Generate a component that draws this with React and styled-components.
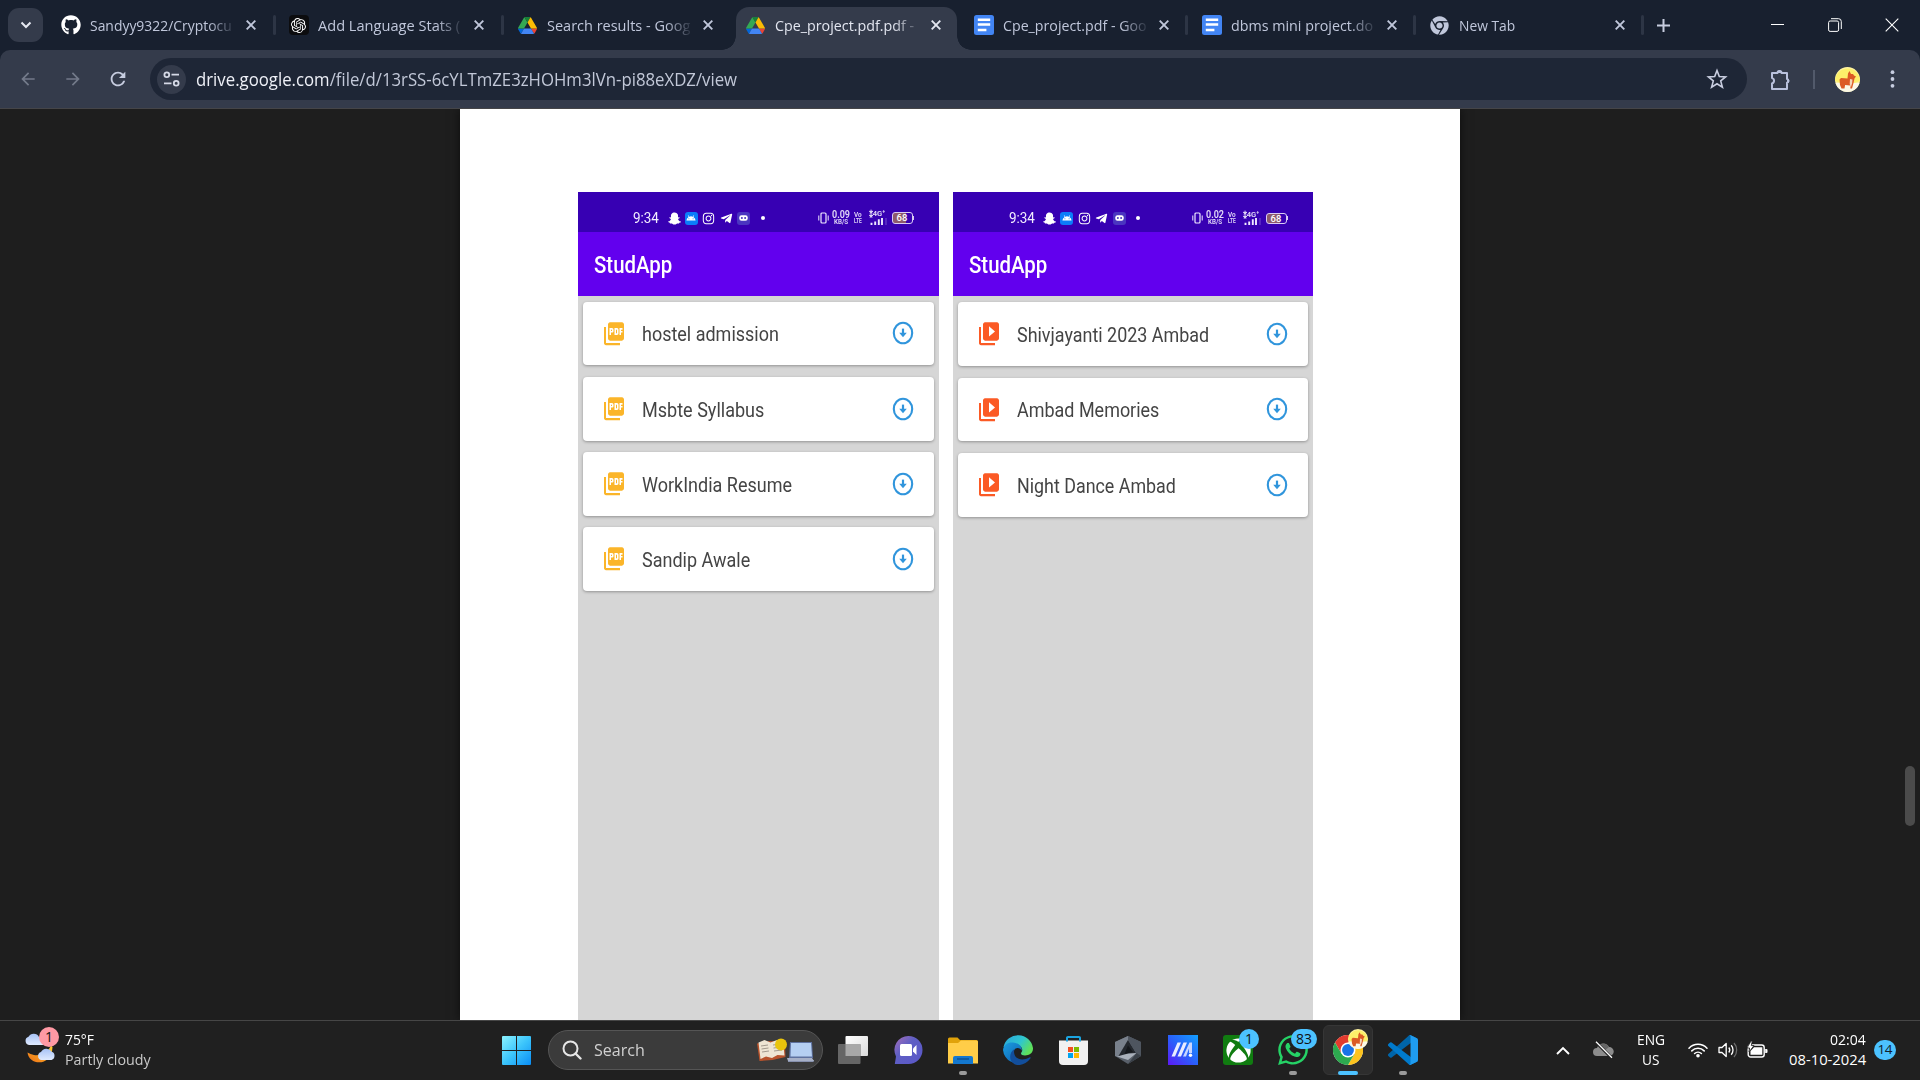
import React, { useLayoutEffect, useRef, useState } from "react";
import styled, { createGlobalStyle, css } from "styled-components";
import { FaGithub, FaXbox, FaWhatsapp, FaInstagram, FaSnapchatGhost, FaTelegramPlane, FaChrome } from "react-icons/fa";
import { SiOpenai } from "react-icons/si";
import { MdPictureAsPdf, MdVideoLibrary, MdArrowBack, MdArrowForward, MdRefresh, MdAndroid } from "react-icons/md";

const GlobalStyle = createGlobalStyle`
  * { box-sizing: border-box; }
  html, body { margin: 0; padding: 0; background: #1e1e1e; overflow: hidden; }
  svg { display: block; flex: none; }
`;

const UI = `"Open Sans", "Noto Sans", sans-serif`;
const PHONE = `Roboto, "Liberation Sans", sans-serif`;

/* ---------- text fitted to a column width ---------- */
const FitBox = styled.span`
  display: block;
  flex: none;
  width: ${(p) => p.$w}px;
  white-space: pre;
  overflow: visible;
`;
const FitInner = styled.span`
  display: inline-block;
  transform-origin: left center;
`;
function Fit({ w, children }) {
  const ref = useRef(null);
  const [scale, setScale] = useState(1);
  useLayoutEffect(() => {
    if (ref.current) setScale(w / ref.current.offsetWidth);
  }, [w, children]);
  return (
    <FitBox $w={w}>
      <FitInner ref={ref} style={{ transform: `scaleX(${scale})` }}>{children}</FitInner>
    </FitBox>
  );
}

/* ---------- shell ---------- */
const Screen = styled.div`
  width: 1920px;
  height: 1080px;
  display: flex;
  flex-direction: column;
  overflow: hidden;
  background: #1e1e1e;
  font-family: ${UI};
`;

/* ---------- tab strip ---------- */
const TabStrip = styled.header`
  height: 50px;
  flex: none;
  display: flex;
  align-items: center;
  background: #18202f;
  padding-left: 8px;
`;
const TabSearch = styled.button`
  width: 35px;
  height: 34px;
  margin-right: 5px;
  border: 0;
  padding: 0;
  border-radius: 11px;
  background: #343b4b;
  display: grid;
  place-items: center;
`;
const TabItem = styled.div`
  position: relative;
  width: 228px;
  height: 50px;
  flex: none;
  display: flex;
  align-items: center;
  padding-left: ${(p) => (p.$shift ? 13.5 : 12.5)}px;
  color: ${(p) => (p.$active ? "#e3e6f0" : "#c0c7db")};
  ${(p) =>
    p.$sep &&
    css`
      &::after {
        content: "";
        position: absolute;
        right: 0;
        top: 15px;
        width: 3px;
        height: 20px;
        border-radius: 2px;
        background: #2d3545;
      }
    `}
`;
const ActiveShape = styled.div`
  position: absolute;
  left: 4px;
  right: 3px;
  top: 7px;
  bottom: 0;
  background: #343b4b;
  border-radius: 13px 13px 0 0;
  &::before,
  &::after {
    content: "";
    position: absolute;
    bottom: 0;
    width: 14px;
    height: 14px;
  }
  &::before {
    left: -14px;
    background: radial-gradient(circle at 0 0, transparent 13.5px, #343b4b 14px);
  }
  &::after {
    right: -14px;
    background: radial-gradient(circle at 100% 0, transparent 13.5px, #343b4b 14px);
  }
`;
const TabIcon = styled.span`
  position: relative;
  width: 20px;
  height: 20px;
  display: grid;
  place-items: center;
`;
const TabTitle = styled.span`
  position: relative;
  width: 144px;
  height: 26px;
  line-height: 24px;
  margin-left: 9.5px;
  padding-top: 1px;
  font-size: 14.8px;
  ${(p) =>
    p.$fade &&
    css`
      mask-image: linear-gradient(90deg, #000 82%, transparent 102%);
    `}
`;
const TabClose = styled.span`
  position: relative;
  width: 20px;
  height: 20px;
  margin-left: 7px;
  display: grid;
  place-items: center;
`;
const NewTab = styled.span`
  width: 39px;
  display: grid;
  place-items: center;
`;
const WindowControls = styled.div`
  margin-left: auto;
  display: flex;
`;
const WindowButton = styled.span`
  width: 57px;
  height: 50px;
  display: grid;
  place-items: center;
`;

/* ---------- toolbar ---------- */
const ToolbarBack = styled.div`
  height: 59px;
  flex: none;
  background: #18202f;
`;
const Toolbar = styled.div`
  height: 59px;
  display: flex;
  align-items: center;
  background: #343b4b;
  border-radius: 10px 10px 0 0;
  border-bottom: 1px solid #454548;
  padding-left: 5px;
`;
const NavButton = styled.span`
  width: 45px;
  display: grid;
  place-items: center;
  color: ${(p) => (p.$dim ? "#737a8a" : "#c7cde0")};
`;
const Omnibox = styled.div`
  width: 1597px;
  height: 42px;
  margin-left: 10px;
  border-radius: 21px;
  background: #1e2636;
  display: flex;
  align-items: center;
  padding: 0 18px 0 7px;
`;
const SiteInfo = styled.span`
  width: 29px;
  height: 29px;
  border-radius: 50%;
  background: #343b4b;
  display: grid;
  place-items: center;
  margin-right: 10px;
`;
const Url = styled.div`
  display: flex;
  font-size: 17.4px;
  line-height: 24px;
  color: #c2c8d8;
  flex: 1;
`;
const Host = styled.span`
  color: #eef0f7;
`;
const ToolIcon = styled.span`
  width: ${(p) => p.$w}px;
  display: grid;
  place-items: center;
  flex: none;
`;
const Divider = styled.span`
  width: 2px;
  height: 19px;
  background: #525a6b;
`;

/* ---------- document ---------- */
const Viewport = styled.main`
  flex: 1;
  min-height: 0;
  display: flex;
  background: #1e1e1e;
  overflow: hidden;
`;
const Gutter = styled.div`
  width: 460px;
  flex: none;
  display: flex;
  justify-content: flex-end;
  align-items: flex-start;
`;
const ScrollThumb = styled.div`
  width: 10px;
  height: 60px;
  margin: 657px 5px 0 0;
  border-radius: 5px;
  background: #4b4b4b;
`;
const Sheet = styled.article`
  width: 1000px;
  flex: none;
  background: #fff;
  box-shadow: 0 0 10px rgba(0, 0, 0, 0.6);
  display: flex;
  align-items: stretch;
  padding: 82px 0 0 117.5px;
  gap: 14px;
`;
const Phone = styled.section`
  width: ${(p) => p.$w}px;
  margin-top: ${(p) => p.$top}px;
  background: #d6d6d6;
  display: flex;
  flex-direction: column;
  font-family: ${PHONE};
`;
const StatusBar = styled.div`
  height: 40.5px;
  flex: none;
  background: #3700b3;
  color: #fff;
  display: flex;
  align-items: center;
  padding: 12.5px 25px 0 55.5px;
`;
const Clock = styled.span`
  font-size: 15px;
  line-height: 16px;
  width: 34.5px;
  color: #f2edff;
`;
const StatusIcons = styled.span`
  display: flex;
  align-items: center;
  gap: 4.4px;
`;
const StatusTile = styled.span`
  width: 13px;
  height: 13px;
  display: grid;
  place-items: center;
  border-radius: 3px;
  background: ${(p) => p.$bg || "transparent"};
`;
const Dot = styled.span`
  width: 4px;
  height: 4px;
  border-radius: 50%;
  background: #fff;
  margin-left: 6.5px;
`;
const StatusRight = styled.span`
  margin-left: auto;
  display: flex;
  align-items: center;
  color: #e3daf8;
`;
const Stack = styled.span`
  display: flex;
  flex-direction: column;
  align-items: center;
  width: ${(p) => p.$w}px;
  margin-left: ${(p) => p.$ml}px;
  font-size: 8px;
  line-height: 6.5px;
  font-weight: 600;
`;
const Rate = styled.span`
  font-size: 11px;
  line-height: 8.5px;
`;
const Battery = styled.span`
  width: 21px;
  height: 11.5px;
  margin-left: 4.5px;
  border: 1px solid #d9cbf4;
  border-radius: 3px;
  background: linear-gradient(90deg, #8d5a6c 70%, #3700b3 70%);
  font-size: 9.5px;
  line-height: 10px;
  font-weight: 500;
  text-align: center;
  color: #fff;
`;
const BatteryTip = styled.span`
  width: 1.5px;
  height: 4px;
  background: #d9cbf4;
`;
const AppBar = styled.div`
  height: 64px;
  flex: none;
  background: #6200ee;
  color: #fff;
  display: flex;
  align-items: center;
  padding: 2px 0 0 16px;
  font-size: 23px;
  font-weight: 500;
`;
const List = styled.div`
  display: flex;
  flex-direction: column;
  padding: 5.6px 5px;
  gap: ${(p) => p.$gap}px;
`;
const Card = styled.div`
  height: 63.8px;
  display: flex;
  align-items: center;
  background: #fff;
  border-radius: 4px;
  box-shadow: 0 1px 3px rgba(0, 0, 0, 0.32);
  padding: 0 20px 0 19px;
  color: #444;
  font-size: 21px;
`;
const CardIcon = styled.span`
  color: ${(p) => p.$color};
  svg {
    width: 24px;
    height: 27.5px;
  }
`;
const CardLabel = styled.span`
  flex: 1;
  margin-left: 16px;
  padding-top: 2px;
  line-height: 26px;
`;

/* ---------- taskbar ---------- */
const Taskbar = styled.footer`
  height: 60px;
  flex: none;
  border-top: 1px solid #464646;
  background: #202020;
  display: flex;
  align-items: center;
  color: #fff;
  padding-bottom: 1px;
`;
const Weather = styled.div`
  width: 478px;
  display: flex;
  align-items: center;
  padding-left: 24px;
`;
const WeatherArt = styled.div`
  position: relative;
  width: 36px;
  height: 40px;
  margin-right: 4.5px;
`;
const Badge = styled.span`
  position: absolute;
  top: ${(p) => p.$top}px;
  left: ${(p) => p.$left}px;
  width: ${(p) => p.$w || 20}px;
  height: 20px;
  border-radius: 10px;
  background: ${(p) => p.$bg};
  color: #111;
  font-size: 14px;
  line-height: 20px;
  text-align: center;
`;
const TwoLine = styled.div`
  display: flex;
  flex-direction: column;
  font-size: 14.8px;
  line-height: 20px;
  padding-bottom: 2px;
  align-items: ${(p) => p.$align || "flex-start"};
`;
const Muted = styled.span`
  color: #c9c9c9;
`;
const StartButton = styled.span`
  width: 70px;
  display: flex;
  padding-left: 24px;
`;
const SearchBox = styled.div`
  width: 275px;
  height: 40px;
  border-radius: 20px;
  background: #3b3b3b;
  border: 1px solid #555;
  display: flex;
  align-items: center;
  padding: 0 8px 0 13px;
  font-size: 17px;
  color: #d0d0d0;
`;
const SearchLabel = styled.span`
  flex: 1;
  margin-left: 12px;
  line-height: 24px;
`;
const Apps = styled.div`
  display: flex;
  margin-left: 5px;
  gap: 5px;
`;
const AppSlot = styled.span`
  position: relative;
  width: 50px;
  height: 50px;
  border-radius: 6px;
  display: grid;
  place-items: center;
  ${(p) =>
    p.$active &&
    css`
      background: #2d2d2d;
      border: 1px solid #363636;
    `}
  ${(p) =>
    p.$running &&
    css`
      &::after {
        content: "";
        position: absolute;
        bottom: ${p.$active ? -0.5 : 0.5}px;
        left: 50%;
        transform: translateX(-50%);
        width: ${p.$active ? 20 : 8}px;
        height: 4px;
        border-radius: 2px;
        background: ${p.$active ? "#4cc2ff" : "#9a9a9a"};
      }
    `}
`;
const Tray = styled.div`
  margin-left: auto;
  display: flex;
  align-items: center;
  padding-right: 24.5px;
`;
const TrayCell = styled.span`
  width: ${(p) => p.$w}px;
  display: grid;
  place-items: center ${(p) => p.$justify || "center"};
`;
const CountPill = styled.span`
  width: 21.5px;
  height: 20px;
  margin-left: 8px;
  border-radius: 10px;
  background: #4cc2ff;
  color: #10202c;
  font-size: 13.5px;
  line-height: 19.5px;
  text-align: center;
  letter-spacing: -0.5px;
`;
const AvatarBadge = styled.span`
  position: absolute;
  top: 3px;
  left: 24px;
`;

/* ---------- drawings ---------- */
const Drive = () => (
  <svg width="19" height="17" viewBox="0 0 87.3 78">
    <path d="m6.6 66.85 3.85 6.65c.8 1.4 1.95 2.5 3.3 3.3L27.5 53H0c0 1.55.4 3.1 1.2 4.5z" fill="#0066da" />
    <path d="M43.65 25 29.9 1.2c-1.35.8-2.5 1.9-3.3 3.3L1.2 48.5A9 9 0 0 0 0 53h27.5z" fill="#34a853" />
    <path d="M73.55 76.8c1.35-.8 2.5-1.9 3.3-3.3l1.6-2.75L86.1 57.5c.8-1.4 1.2-2.95 1.2-4.5H59.8l5.85 11.5z" fill="#ea4335" />
    <path d="M43.65 25 57.4 1.2C56.05.4 54.5 0 52.9 0H34.4c-1.6 0-3.15.45-4.5 1.2z" fill="#188038" />
    <path d="M59.8 53H27.5L13.75 76.8c1.35.8 2.9 1.2 4.5 1.2h50.8c1.6 0 3.15-.45 4.5-1.2z" fill="#4285f4" />
    <path d="m73.4 26.5-12.7-22c-.8-1.4-1.95-2.5-3.3-3.3L43.65 25 59.8 53h27.45c0-1.55-.4-3.1-1.2-4.5z" fill="#fbbc04" />
  </svg>
);
const Docs = () => (
  <svg width="20" height="20" viewBox="0 0 20 20">
    <rect width="20" height="20" rx="2.5" fill="#4285f4" />
    <path d="M3.8 4.7h12.4M3.8 9.6h12.4M3.8 15h8.6" stroke="#fff" strokeWidth="2.5" />
  </svg>
);
const OpenAiTile = styled.span`
  width: 20px;
  height: 20px;
  border-radius: 4px;
  background: #0c0c0e;
  color: #fff;
  display: grid;
  place-items: center;
`;
const ChromeColor = () => (
  <svg width="30" height="30" viewBox="0 0 48 48">
    <circle cx="24" cy="24" r="24" fill="#fff" />
    <path d="M24 12h20.8A24 24 0 0 0 3.2 12l10.4 18z" fill="#e33b2e" />
    <path d="M24 12h20.8A24 24 0 0 1 24 48l10.4-18z" fill="#fcc31e" />
    <path d="M34.4 30 24 48A24 24 0 0 1 3.2 12l10.4 18z" fill="#2da94f" />
    <circle cx="24" cy="24" r="12" fill="#fff" />
    <circle cx="24" cy="24" r="9.5" fill="#1a73e8" />
  </svg>
);
const Cross = ({ s = 9, w = 1.8, c = "currentColor" }) => (
  <svg width={s} height={s} viewBox={`0 0 ${s} ${s}`}>
    <path d={`M.7 .7 ${s - 0.7} ${s - 0.7}M${s - 0.7} .7 .7 ${s - 0.7}`} stroke={c} strokeWidth={w} fill="none" />
  </svg>
);
const Corgi = ({ s = 25 }) => (
  <svg width={s} height={s} viewBox="0 0 25 25">
    <circle cx="12.5" cy="12.5" r="12.5" fill="#fff3a0" />
    <path d="M0 14a12.5 12.5 0 1 1 25 0l-6 2H6z" fill="#fdf06a" />
    <path d="M.5 16h24A12.5 12.5 0 0 1 .5 16z" fill="#fbf8e6" />
    <path d="M4.5 12.5 6 11l6.500.5L13 6.500l1.500-2.500 1.500 3h2l1 1.500 2 1-1.500 2-1 4.500-1.500 5.500h-1.600l-.3-3-5-.5-.6 3.500H6.500L5 18z" fill="#dc5b24" />
    <path d="m15 12 2.500.5-.4 3.700-1.400 4.600-1-4z" fill="#f3d5b8" />
  </svg>
);
const Gamepad = () => (
  <svg width="9" height="6" viewBox="0 0 9 6">
    <rect x=".3" y=".3" width="8.400" height="5.400" rx="2.200" fill="#fff" />
    <circle cx="2.900" cy="3" r="1" fill="#4a35c0" /><circle cx="6.100" cy="3" r="1" fill="#4a35c0" />
  </svg>
);
const DownloadRing = () => (
  <svg width="22" height="24" viewBox="0 0 22 24">
    <ellipse cx="11" cy="12" rx="9.2" ry="10.3" fill="none" stroke="#3095dc" strokeWidth="2.1" />
    <path d="M11 7.6v5" stroke="#3095dc" strokeWidth="2.2" />
    <path d="M7.2 11.8h7.6L11 16.2z" fill="#3095dc" />
  </svg>
);
const Vibrate = () => (
  <svg width="11" height="12" viewBox="0 0 11 12">
    <rect x="3" y="1" width="5" height="10" rx="1" fill="none" stroke="#efe9ff" strokeWidth="1.2" />
    <path d="M.8 3.500v5M10.2 3.500v5" stroke="#efe9ff" />
  </svg>
);
const Bars = () => (
  <svg width="20" height="7" viewBox="0 0 20 8" preserveAspectRatio="none">
    <path d="M4.500 8V5.500M8.200 8V4M11.800 8V1.500M15 8V0" stroke="#efe9ff" strokeWidth="1.900" />
    <path d="M19 8V0" stroke="#7752cf" />
  </svg>
);
const WeatherIcon = () => (
  <svg width="36" height="40" viewBox="0 0 36 40">
    <defs>
      <linearGradient id="moon" x1="1" y1="0" x2="0" y2="1"><stop offset="0" stopColor="#ffd02e" /><stop offset="1" stopColor="#ee6f16" /></linearGradient>
      <linearGradient id="cloud" x1="0" y1="0" x2="0" y2="1"><stop offset="0" stopColor="#a7c2f5" /><stop offset="1" stopColor="#dfeafe" /></linearGradient>
    </defs>
    <path d="M27 15.5A16 16 0 0 1 3.5 22.500C5 36 28 37 28.500 17z" fill="url(#moon)" />
    <path d="M5 15a4.300 4.300 0 0 1-.5-8.300A6 6 0 0 1 15 7a5 5 0 0 1 4 8z" fill="url(#cloud)" />
    <path d="M17 30a4.200 4.200 0 0 1 0-8 6 6 0 0 1 10.500-.5 4.500 4.500 0 0 1 0 8.500z" fill="url(#cloud)" />
  </svg>
);
const Windows = () => (
  <svg width="29" height="29" viewBox="0 0 29 29">
    <defs><linearGradient id="win" x1="0" y1="0" x2="1" y2="1"><stop offset="0" stopColor="#8cf3ff" /><stop offset=".5" stopColor="#3cc5fb" /><stop offset="1" stopColor="#0a8df5" /></linearGradient></defs>
    <path d="M1 0h13v14H0V1a1 1 0 0 1 1-1zM15 0h13a1 1 0 0 1 1 1v13H15zM0 15h14v14H1a1 1 0 0 1-1-1zM15 15h14v13a1 1 0 0 1-1 1H15z" fill="url(#win)" />
  </svg>
);
const SearchGlass = () => (
  <svg width="20" height="20" viewBox="0 0 20 20">
    <circle cx="8.500" cy="8.500" r="7" fill="none" stroke="#e6e6e6" strokeWidth="2" />
    <path d="m13.500 13.500 5 5" stroke="#e6e6e6" strokeWidth="2.400" strokeLinecap="round" />
  </svg>
);
const SearchArt = () => (
  <svg width="57" height="24" viewBox="0 0 57 24">
    <path d="M0 5.500 13 3l15 1 .5 15-13 3-13 1z" fill="#b8532c" />
    <path d="m1.500 4.500 6-2.500 6 2.500L15 20l-6-1.500-5.500 2.500zM13.500 4.500 20 2l6 1 1.500 14.500-7-.5-5.500 3z" fill="#eee5d3" />
    <path d="m4 8 7-1M4.500 11l7-1M5 14l7-1M16 7l8-1M16.500 10l8-1M17 13l8-1" stroke="#9a9184" strokeWidth=".9" />
    <circle cx="24" cy="6.500" r="6" fill="#e9c40c" />
    <path d="M33 4h22l1 16H32z" fill="#5e719f" />
    <path d="M34 5h20l1 13.500H33.500z" fill="#b5cff2" />
    <path d="M31 20.500 57 22l-.5 2H31z" fill="#8791ae" />
    <path d="M30 20h25l2 3H31z" fill="#a7b0c7" />
  </svg>
);
const TaskView = () => (
  <svg width="30" height="28" viewBox="0 0 30 28">
    <defs><linearGradient id="tv" x1="0" y1="0" x2="1" y2="1"><stop offset="0" stopColor="#fff" /><stop offset="1" stopColor="#dadada" /></linearGradient></defs>
    <rect x="7.500" y="0" width="22.500" height="20" rx="1" fill="url(#tv)" />
    <rect x="0" y="8" width="22.500" height="20" rx="1" fill="#666" />
    <path d="M7.500 8h15v12h-15z" fill="#a8a8a8" />
  </svg>
);
const Chat = () => (
  <svg width="29" height="28" viewBox="0 0 29 28">
    <defs><linearGradient id="chat" x1="0" y1="0" x2="1" y2="1"><stop offset="0" stopColor="#a96fb8" /><stop offset=".4" stopColor="#5f5fc4" /><stop offset="1" stopColor="#5a57c9" /></linearGradient></defs>
    <path d="M14.500 0a14 14 0 1 1 0 28H.8l1.200-7.500A14 14 0 0 1 14.500 0z" fill="url(#chat)" />
    <rect x="6" y="8" width="12" height="12" rx="1.500" fill="#fff" />
    <path d="m19 12.500 3.500-3.500v10L19 15.500z" fill="#fff" />
  </svg>
);
const Folder = () => (
  <svg width="30" height="27" viewBox="0 0 30 27">
    <path d="M0 2a1.500 1.500 0 0 1 1.500-1.500h8L12 3h16.500A1.500 1.500 0 0 1 30 4.500V10H0z" fill="#e0a20a" />
    <path d="M0 6h10l3-2.500h15.500A1.500 1.500 0 0 1 30 5v21.500H0z" fill="#ffcd48" />
    <path d="M5 21a2 2 0 0 1 2-2h16a2 2 0 0 1 2 2v6H5z" fill="#1478cf" />
    <path d="M9 22h12" stroke="#0b5294" strokeWidth="1.500" />
  </svg>
);
const Edge = () => (
  <svg width="30" height="30" viewBox="0 0 30 30">
    <defs>
      <linearGradient id="e1" x1="0" y1="0" x2="1" y2=".5"><stop offset="0" stopColor="#2aa5dc" /><stop offset=".6" stopColor="#2fc6cf" /><stop offset="1" stopColor="#5ee05a" /></linearGradient>
      <linearGradient id="e2" x1="0" y1="0" x2="1" y2="1"><stop offset="0" stopColor="#1b9fe0" /><stop offset="1" stopColor="#0c56ac" /></linearGradient>
    </defs>
    <path d="M.5 12A15 15 0 0 1 30 13c.3 5-3.500 7.500-8 7.500-3.500 0-4.800-1.500-3.500-3.200 2-3 0-7-5.500-7.300C7 9.500 2 12 .5 12z" fill="url(#e1)" />
    <path d="M0 15c.5-5.500 5.500-8 10-7.500 5 .4 9.500 3.700 8.600 8.200-.6-3-6.100-4.200-7.600-.2-2 5 1.500 12.500 10.500 11.500A15 15 0 0 1 0 15z" fill="url(#e2)" />
    <path d="M11.500 14C9 22 17 28 26.800 22.300c.6-.3 1.200.2.7.9C23.500 29 16.500 31 13 29.800 5 27 6 17 11.500 14z" fill="#124e9b" />
  </svg>
);
const Store = () => (
  <svg width="29" height="29" viewBox="0 0 29 29">
    <path d="M8 7V2a1 1 0 0 1 1-1h11a1 1 0 0 1 1 1v5" fill="none" stroke="#1ba4e0" strokeWidth="2" />
    <path d="M0 4.500h29V25a4 4 0 0 1-4 4H4a4 4 0 0 1-4-4z" fill="#f1f1f1" />
    <path d="M8 1.500v4M21 1.500v4" stroke="#1ba4e0" strokeWidth="2" />
    <path d="M9 11h5v5H9z" fill="#f25022" /><path d="M15 11h5v5h-5z" fill="#7fba00" />
    <path d="M9 17h5v5H9z" fill="#00a4ef" /><path d="M15 17h5v5h-5z" fill="#ffb900" />
  </svg>
);
const Crate = () => (
  <svg width="28" height="28" viewBox="0 0 28 28">
    <path d="M14 0 27 6v14l-13 8L1 20V6z" fill="#59606a" />
    <path d="M14 0 1 6v14l3 1L14 4z" fill="#79818c" />
    <path d="m14 4 8 13-8 3.500L4 21z" fill="#24282e" />
    <path d="M14 0v4l8 13 5 3V6z" fill="#4e555f" />
    <path d="m3 20.500 11-3 8.500-.5-8.500 7z" fill="#a9b0ba" />
    <path d="m14 9.500 5 6.500-8.500 2z" fill="#15181c" />
    <path d="m14 28 13-8-4.500-3z" fill="#3a4048" />
  </svg>
);
const Armoury = () => (
  <svg width="30" height="30" viewBox="0 0 30 30">
    <defs><linearGradient id="ma" x1="1" y1="0" x2="0" y2="1"><stop offset="0" stopColor="#12a0ff" /><stop offset=".5" stopColor="#2962fb" /><stop offset="1" stopColor="#5d18f5" /></linearGradient></defs>
    <path d="M0 0h30v30H0z" fill="url(#ma)" />
    <path d="m3.500 21.500 6-14h3.500l-6 14zM9.500 21.500l6-14H19l-6 14z" fill="#e9ecff" />
    <path d="m15 21.500 6.500-14H24V18h-3v-4.500l-3 8z" fill="#c8d6ff" />
    <circle cx="22.500" cy="20.300" r="1.700" fill="#fff" />
  </svg>
);
const XboxTile = styled.span`
  width: 30px;
  height: 30px;
  border-radius: 3px;
  background: #107c10;
  color: #fff;
  display: grid;
  place-items: center;
`;
const Code = () => (
  <svg width="30" height="30" viewBox="0 0 100 100">
    <path d="M96.500 10.800 75.900.9a6.200 6.200 0 0 0-7.100 1.200L1.300 63.600a4.200 4.200 0 0 0 0 6.200l5.500 5a4.200 4.200 0 0 0 5.300.2l81.200-61.600a4 4 0 0 1 6.500 3.200v-.2a6.200 6.200 0 0 0-3.300-5.600z" fill="#0065a9" />
    <path d="m96.500 89.200-20.600 9.900a6.200 6.200 0 0 1-7.100-1.200L1.300 36.400a4.200 4.200 0 0 1 0-6.200l5.500-5a4.200 4.200 0 0 1 5.300-.2l81.200 61.600a4 4 0 0 0 6.500-3.200v.2a6.200 6.200 0 0 1-3.300 5.600z" fill="#007acc" />
    <path d="M75.900 99.100a6.200 6.200 0 0 1-7.100-1.200c2.300 2.300 6.200.7 6.200-2.600V4.700c0-3.300-3.900-4.900-6.200-2.600a6.200 6.200 0 0 1 7.100-1.200l20.600 9.900a6.200 6.200 0 0 1 3.500 5.600v67.200a6.200 6.200 0 0 1-3.500 5.600z" fill="#1f9cf0" />
  </svg>
);
const CloudOff = () => (
  <svg width="21" height="18" viewBox="0 0 21 18">
    <path d="M4 15a4 4 0 0 1 0-8 6.500 6.500 0 0 1 12-1 4.500 4.500 0 0 1 .5 9z" fill="#8c8c8c" />
    <path d="M6 4.500a6.500 6.500 0 0 1 10 1.500l-5 4z" fill="#666" />
    <path d="m2.500.8 16 16" stroke="#202020" strokeWidth="3" />
    <path d="m3 .8 16 16" stroke="#fff" strokeWidth="1.300" />
  </svg>
);
const Wifi = () => (
  <svg width="20" height="16" viewBox="0 0 20 16">
    <g fill="none" stroke="#fff" strokeWidth="1.500" strokeLinecap="round">
      <path d="M1 6.200a12.500 12.500 0 0 1 18 0M3.800 8.900a8.700 8.700 0 0 1 12.400 0M6.600 11.500a4.900 4.900 0 0 1 6.800 0" />
    </g>
    <circle cx="10" cy="13.700" r="1.800" fill="#fff" />
  </svg>
);
const Volume = () => (
  <svg width="20" height="16" viewBox="0 0 20 16" fill="none" strokeWidth="1.300">
    <path d="M1 5.500h3L8.200 1.500v13L4 10.500H1z" stroke="#fff" strokeLinejoin="round" />
    <path d="M10.800 5.500a4 4 0 0 1 0 5M13.200 3.300a7 7 0 0 1 0 9.400" stroke="#fff" />
    <path d="M16 1a10.500 10.500 0 0 1 0 14" stroke="#6b6b6b" />
  </svg>
);
const BatteryTray = () => (
  <svg width="21" height="18" viewBox="0 0 21 18">
    <rect x="1.200" y="4" width="16" height="12" rx="2.500" fill="none" stroke="#fff" strokeWidth="1.400" />
    <path d="M3.500 13.800V10l3.500-3.800h8.300v7.600z" fill="#fff" />
    <path d="M18.200 8h1.300a1 1 0 0 1 1 1v2a1 1 0 0 1-1 1h-1.300z" fill="#fff" />
    <path d="M4 0 0 7h2.600L2 11l5-6.500H4.300L5.300 0z" fill="#fff" stroke="#202020" strokeWidth=".8" />
  </svg>
);

/* ---------- data ---------- */
const tabs = [
  { icon: <FaGithub size={20} color="#fff" />, title: "Sandyy9322/Cryptocu", w: 142, sep: true },
  { icon: <OpenAiTile><SiOpenai size={15} /></OpenAiTile>, title: "Add Language Stats (", w: 142, sep: true },
  { icon: <Drive />, title: "Search results - Goog", w: 143, shift: true },
  { icon: <Drive />, title: "Cpe_project.pdf.pdf -", w: 139, active: true, shift: true },
  { icon: <Docs />, title: "Cpe_project.pdf - Goo", w: 144, sep: true, shift: true },
  { icon: <Docs />, title: "dbms mini project.do", w: 142, sep: true, shift: true },
  { icon: <FaChrome size={19} />, title: "New Tab", w: 56, plain: true, sep: true, shift: true },
];
const phones = [
  {
    w: 361.5, top: 0.5, gap: 11.45, rate: "0.09", Icon: MdPictureAsPdf, color: "#fbb529",
    items: [["hostel admission", 137], ["Msbte Syllabus", 122], ["WorkIndia Resume", 150], ["Sandip Awale", 108]],
  },
  {
    w: 360, top: 0.9, gap: 11.8, rate: "0.02", Icon: MdVideoLibrary, color: "#fb5a25",
    items: [["Shivjayanti 2023 Ambad", 192], ["Ambad Memories", 142], ["Night Dance Ambad", 159]],
  },
];

function PhoneScreen({ w, top, gap, rate, Icon, color, items }) {
  return (
    <Phone $w={w} $top={top}>
      <StatusBar>
        <Clock><Fit w={26}>9:34</Fit></Clock>
        <StatusIcons>
          <StatusTile><FaSnapchatGhost size={13} /></StatusTile>
          <StatusTile $bg="#0b7dfa"><MdAndroid size={10} /></StatusTile>
          <StatusTile><FaInstagram size={13} /></StatusTile>
          <StatusTile><FaTelegramPlane size={13} /></StatusTile>
          <StatusTile $bg="#4a35c0"><Gamepad /></StatusTile>
          <Dot />
        </StatusIcons>
        <StatusRight>
          <Vibrate />
          <Stack $w={18} $ml={3}><Rate><Fit w={18}>{rate}</Fit></Rate><Fit w={14}>KB/S</Fit></Stack>
          <Stack $w={8} $ml={4}><Fit w={8}>Vo</Fit><Fit w={8}>LTE</Fit></Stack>
          <Stack $w={20} $ml={5}><Fit w={16}>⁑4G⁺</Fit><Bars /></Stack>
          <Battery>68</Battery>
          <BatteryTip />
        </StatusRight>
      </StatusBar>
      <AppBar><Fit w={78}>StudApp</Fit></AppBar>
      <List $gap={gap}>
        {items.map(([label, width]) => (
          <Card key={label}>
            <CardIcon $color={color}><Icon preserveAspectRatio="none" /></CardIcon>
            <CardLabel><Fit w={width}>{label}</Fit></CardLabel>
            <DownloadRing />
          </Card>
        ))}
      </List>
    </Phone>
  );
}

export default function App() {
  return (
    <Screen>
      <GlobalStyle />
      <TabStrip>
        <TabSearch>
          <svg width="12" height="8" viewBox="0 0 12 8"><path d="m1.500 1.500 4.500 4.500 4.500-4.500" fill="none" stroke="#e6e9f2" strokeWidth="2" /></svg>
        </TabSearch>
        {tabs.map((t, i) => (
          <TabItem key={i} $active={t.active} $sep={t.sep} $shift={t.shift}>
            {t.active && <ActiveShape />}
            <TabIcon>{t.icon}</TabIcon>
            <TabTitle $fade={!t.plain}><Fit w={t.w}>{t.title}</Fit></TabTitle>
            <TabClose><Cross s={10} w={1.9} /></TabClose>
          </TabItem>
        ))}
        <NewTab>
          <svg width="13" height="13" viewBox="0 0 13 13"><path d="M6.500 0v13M0 6.500h13" stroke="#c7cde0" strokeWidth="2" /></svg>
        </NewTab>
        <WindowControls>
          <WindowButton><svg width="13" height="2" viewBox="0 0 13 2"><path d="M0 .5h13" stroke="#fff" strokeWidth="1" /></svg></WindowButton>
          <WindowButton>
            <svg width="14" height="14" viewBox="0 0 14 14" fill="none" stroke="#fff">
              <rect x=".6" y="3" width="10" height="10.400" rx="1.500" /><path d="M3 .7h7.500a2.800 2.800 0 0 1 2.800 2.800V11" />
            </svg>
          </WindowButton>
          <WindowButton><Cross s={14} w={1.1} c="#fff" /></WindowButton>
        </WindowControls>
      </TabStrip>

      <ToolbarBack>
        <Toolbar>
          <NavButton $dim><MdArrowBack size={20} /></NavButton>
          <NavButton $dim><MdArrowForward size={20} /></NavButton>
          <NavButton><MdRefresh size={22} /></NavButton>
          <Omnibox>
            <SiteInfo>
              <svg width="17" height="16" viewBox="0 0 17 16" fill="none" stroke="#d5d9e6" strokeWidth="1.800">
                <circle cx="3.800" cy="3.700" r="2.400" /><path d="M8.500 3.700H16M1 12.300h7.500" /><circle cx="13.200" cy="12.300" r="2.400" />
              </svg>
            </SiteInfo>
            <Url><Fit w={541}><Host>drive.google.com</Host>/file/d/13rSS-6cYLTmZE3zHOHm3lVn-pi88eXDZ/view</Fit></Url>
            <svg width="24" height="24" viewBox="0 0 24 24"><path d="m12 3.500 2.300 6 6.300.4-4.900 4 1.700 6.300-5.400-3.400-5.400 3.400 1.700-6.300-4.900-4 6.300-.4z" fill="none" stroke="#c9cee0" strokeWidth="1.600" /></svg>
          </Omnibox>
          <ToolIcon $w={66}>
            <svg width="23" height="23" viewBox="0 0 23 23"><path d="M3 5h5.500a2 2 0 0 1 4 0H18v6a2 2 0 0 1 0 3.800V21H3v-5.500a2.800 2.800 0 0 0 0-5.400z" fill="none" stroke="#b9c1dc" strokeWidth="2" strokeLinejoin="round" /><path d="M8.700 4.500a1.800 1.800 0 0 1 3.600 0zM18.500 11a2 2 0 0 1 0 3.800z" fill="#b9c1dc" stroke="#b9c1dc" /></svg>
          </ToolIcon>
          <Divider />
          <ToolIcon $w={64}><Corgi /></ToolIcon>
          <ToolIcon $w={26}>
            <svg width="5" height="18" viewBox="0 0 5 18" fill="#c7cde0"><circle cx="2.500" cy="2.200" r="1.900" /><circle cx="2.500" cy="9" r="1.900" /><circle cx="2.500" cy="15.800" r="1.900" /></svg>
          </ToolIcon>
        </Toolbar>
      </ToolbarBack>

      <Viewport>
        <Gutter />
        <Sheet>{phones.map((p) => <PhoneScreen key={p.rate} {...p} />)}</Sheet>
        <Gutter><ScrollThumb /></Gutter>
      </Viewport>

      <Taskbar>
        <Weather>
          <WeatherArt><WeatherIcon /><Badge $top={-3} $left={15} $bg="#ff99a4">1</Badge></WeatherArt>
          <TwoLine><Fit w={29}>75°F</Fit><Muted><Fit w={86}>Partly cloudy</Fit></Muted></TwoLine>
        </Weather>
        <StartButton><Windows /></StartButton>
        <SearchBox><SearchGlass /><SearchLabel><Fit w={51}>Search</Fit></SearchLabel><SearchArt /></SearchBox>
        <Apps>
          <AppSlot><TaskView /></AppSlot>
          <AppSlot><Chat /></AppSlot>
          <AppSlot $running><Folder /></AppSlot>
          <AppSlot><Edge /></AppSlot>
          <AppSlot><Store /></AppSlot>
          <AppSlot><Crate /></AppSlot>
          <AppSlot><Armoury /></AppSlot>
          <AppSlot><XboxTile><FaXbox size={25} /></XboxTile><Badge $top={4} $left={26} $bg="#4cc2ff">1</Badge></AppSlot>
          <AppSlot $running><FaWhatsapp size={34} color="#25d366" /><Badge $top={4} $left={23} $w={26} $bg="#4cc2ff">83</Badge></AppSlot>
          <AppSlot $running $active><ChromeColor /><AvatarBadge><Corgi s={20} /></AvatarBadge></AppSlot>
          <AppSlot $running><Code /></AppSlot>
        </Apps>
        <Tray>
          <TrayCell $w={50}><svg width="14" height="9" viewBox="0 0 14 9"><path d="m1 8 6-6 6 6" fill="none" stroke="#fff" strokeWidth="1.900" /></svg></TrayCell>
          <TrayCell $w={31}><CloudOff /></TrayCell>
          <TrayCell $w={65}><TwoLine $align="center"><Fit w={28}>ENG</Fit><Fit w={17.5}>US</Fit></TwoLine></TrayCell>
          <TrayCell $w={29}><Wifi /></TrayCell>
          <TrayCell $w={30}><Volume /></TrayCell>
          <TrayCell $w={30}><BatteryTray /></TrayCell>
          <TrayCell $w={93.5} $justify="end"><TwoLine $align="flex-end"><Fit w={36}>02:04</Fit><Fit w={77}>08-10-2024</Fit></TwoLine></TrayCell>
          <CountPill>14</CountPill>
        </Tray>
      </Taskbar>
    </Screen>
  );
}
